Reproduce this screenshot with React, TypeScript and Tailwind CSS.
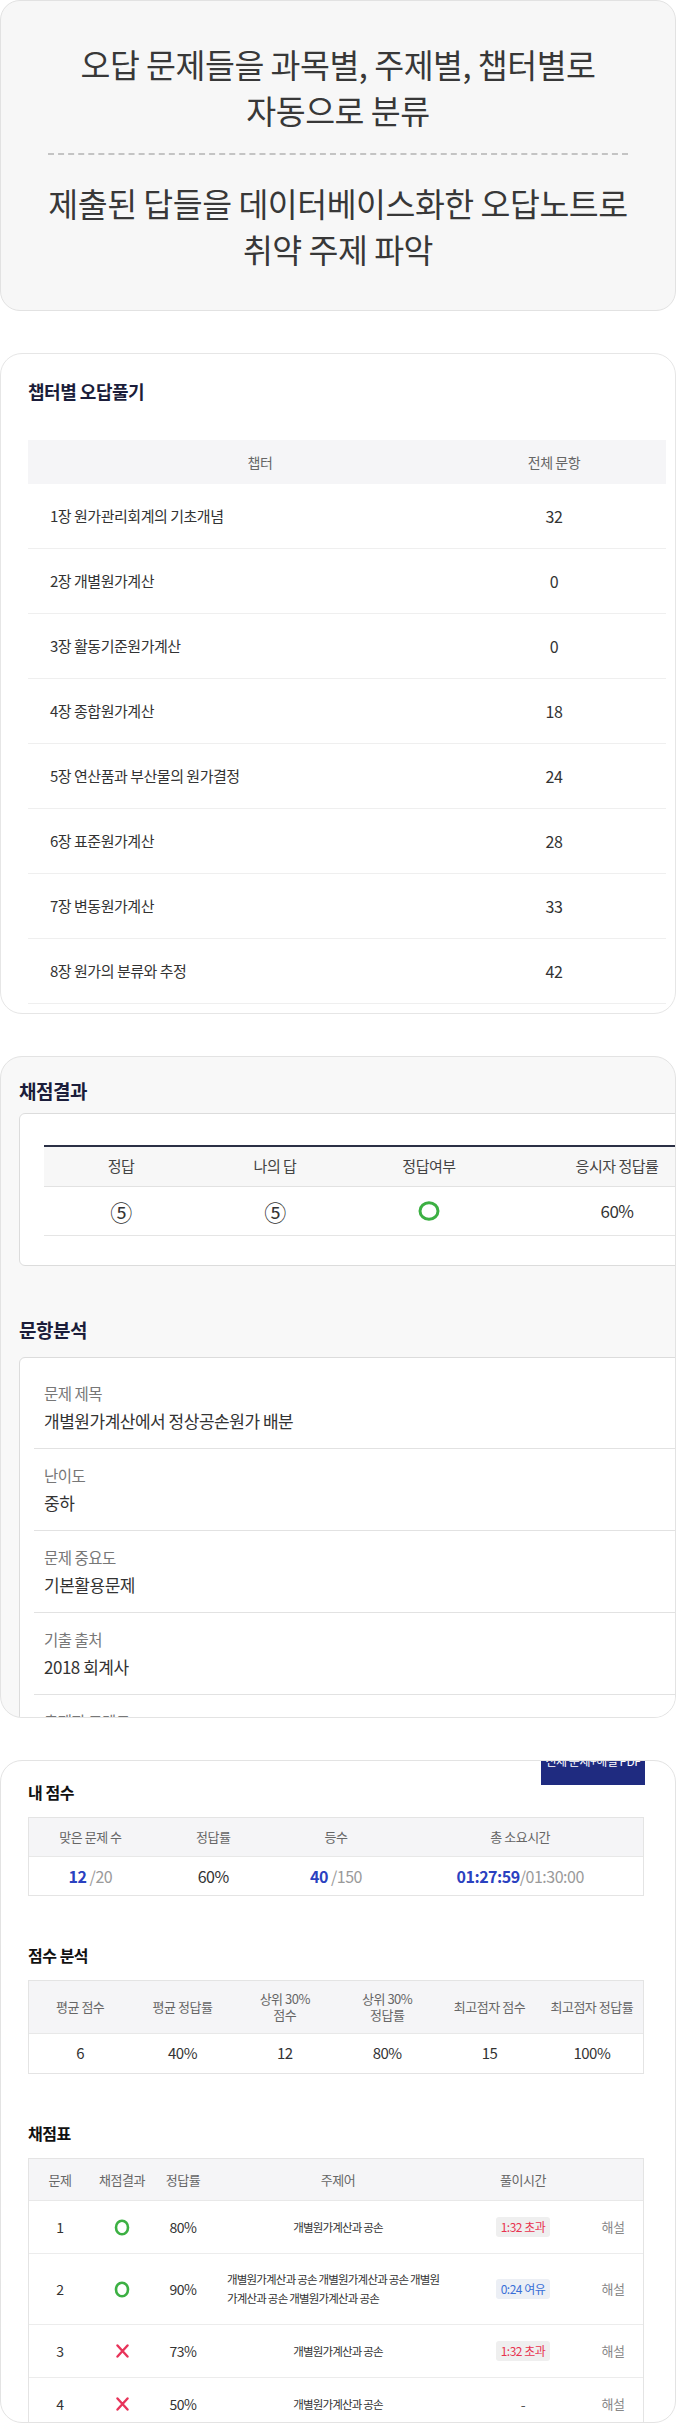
import React from "react";

const chapters = [
  { name: "1장 원가관리회계의 기초개념", count: 32 },
  { name: "2장 개별원가계산", count: 0 },
  { name: "3장 활동기준원가계산", count: 0 },
  { name: "4장 종합원가계산", count: 18 },
  { name: "5장 연산품과 부산물의 원가결정", count: 24 },
  { name: "6장 표준원가계산", count: 28 },
  { name: "7장 변동원가계산", count: 33 },
  { name: "8장 원가의 분류와 추정", count: 42 },
];

const analysis = [
  { label: "문제 제목", value: "개별원가계산에서 정상공손원가 배분" },
  { label: "난이도", value: "중하" },
  { label: "문제 중요도", value: "기본활용문제" },
  { label: "기출 출처", value: "2018 회계사" },
  { label: "출제자 코멘트", value: "" },
];

const scoreStats = [
  { label: ["평균 점수"], value: "6" },
  { label: ["평균 정답률"], value: "40%" },
  { label: ["상위 30%", "점수"], value: "12" },
  { label: ["상위 30%", "정답률"], value: "80%" },
  { label: ["최고점자 점수"], value: "15" },
  { label: ["최고점자 정답률"], value: "100%" },
];

type Row = {
  no: number;
  ok: boolean;
  rate: string;
  topic: string;
  time?: { text: string; over: boolean };
  tall?: boolean;
};

const rows: Row[] = [
  { no: 1, ok: true, rate: "80%", topic: "개별원가계산과 공손", time: { text: "1:32 초과", over: true } },
  {
    no: 2,
    ok: true,
    rate: "90%",
    topic: "개별원가계산과 공손 개별원가계산과 공손 개별원가계산과 공손 개별원가계산과 공손",
    time: { text: "0:24 여유", over: false },
    tall: true,
  },
  { no: 3, ok: false, rate: "73%", topic: "개별원가계산과 공손", time: { text: "1:32 초과", over: true } },
  { no: 4, ok: false, rate: "50%", topic: "개별원가계산과 공손" },
];

const CircleO = () => (
  <svg width="16" height="17" viewBox="0 0 16 17" fill="none">
    <ellipse cx="8" cy="8.5" rx="6" ry="6.8" stroke="#3cb043" strokeWidth="2.6" />
  </svg>
);

const CrossX = () => (
  <svg width="13" height="14" viewBox="0 0 13 14" fill="none">
    <path d="M1.5 1.5L11.5 12.5M11.5 1.5L1.5 12.5" stroke="#e8345a" strokeWidth="2.4" strokeLinecap="round" />
  </svg>
);

export default function App() {
  return (
    <div className="w-[676px] bg-white font-['Noto_Sans_CJK_KR','Noto_Sans',sans-serif] tracking-[-0.03em] flex flex-col gap-[42px]">
      {/* intro card */}
      <div className="h-[311px] rounded-[20px] border border-[#e2e2e2] bg-[#f7f7f7] flex flex-col items-center pt-[40px] text-[#383838]">
        <p className="text-[32.5px] leading-[46px] text-center">
          오답 문제들을 과목별, 주제별, 챕터별로
          <br />
          자동으로 분류
        </p>
        <div className="w-[580px] mt-[20px] border-t-2 border-dashed border-[#c4c4c4]" />
        <p className="mt-[25px] text-[32.5px] leading-[46px] text-center">
          제출된 답들을 데이터베이스화한 오답노트로
          <br />
          취약 주제 파악
        </p>
      </div>

      {/* chapter card */}
      <div className="h-[661px] overflow-hidden rounded-[22px] border border-[#e6e6e6] bg-white pl-[27px] pr-[9px] pt-[24px]">
        <h2 className="text-[18px] font-bold leading-[26px] text-[#1b1d3a]">챕터별 오답풀기</h2>
        <div className="mt-[36px]">
          <div className="grid h-[44px] grid-cols-[464px_124px_1fr] items-center bg-[#f5f5f7] text-[14px] text-[#666]">
            <div className="text-center">챕터</div>
            <div className="text-center">전체 문항</div>
          </div>
          {chapters.map((c) => (
            <div
              key={c.name}
              className="grid h-[65px] grid-cols-[464px_124px_1fr] items-center border-b border-[#efefef] text-[15px] text-[#333]"
            >
              <div className="pl-[22px]">{c.name}</div>
              <div className="text-center text-[16px]">{c.count}</div>
            </div>
          ))}
        </div>
      </div>

      {/* result card */}
      <div className="h-[662px] overflow-hidden rounded-[22px] border border-[#e3e3e3] bg-[#f8f8f8] pl-[18px] pt-[20px]">
        <h2 className="text-[19px] font-bold leading-[28px] text-[#1b1d3a]">채점결과</h2>
        <div className="mt-[8px] h-[153px] w-[720px] rounded-[6px] border border-[#dcdcdc] bg-white pl-[24px] pt-[31px]">
          <div className="border-t-2 border-[#2b3045]">
            <div className="grid h-[40px] grid-cols-[154px_154px_154px_222px] items-center border-b border-[#e2e2e2] bg-[#f7f7f7] text-[15px] text-[#444]">
              <div className="text-center">정답</div>
              <div className="text-center">나의 답</div>
              <div className="text-center">정답여부</div>
              <div className="text-center">응시자 정답률</div>
            </div>
            <div className="grid h-[49px] grid-cols-[154px_154px_154px_222px] items-center border-b border-[#e5e5e5] text-[#333]">
              <div className="text-center text-[22px] leading-[26px]">⑤</div>
              <div className="text-center text-[22px] leading-[26px]">⑤</div>
              <div className="flex justify-center">
                <svg width="22" height="20" viewBox="0 0 22 20" fill="none">
                  <ellipse cx="11" cy="10" rx="9" ry="8.2" stroke="#3cb043" strokeWidth="3" />
                </svg>
              </div>
              <div className="text-center text-[17px]">60%</div>
            </div>
          </div>
        </div>

        <h2 className="mt-[50px] text-[19px] font-bold leading-[28px] text-[#1b1d3a]">문항분석</h2>
        <div className="mt-[13px] w-[720px] rounded-[6px] border border-[#dcdcdc] bg-white pl-[14px] pt-[9px]">
          {analysis.map((a) => (
            <div key={a.label} className="flex flex-col gap-[3px] border-b border-[#e2e2e2] px-[10px] py-[14px]">
              <span className="text-[15.5px] leading-[24px] text-[#777]">{a.label}</span>
              <span className="text-[17px] leading-[26px] text-[#333]">{a.value}</span>
            </div>
          ))}
        </div>
      </div>

      {/* score card */}
      <div className="relative h-[663px] overflow-hidden rounded-[22px] border border-[#e3e3e3] bg-white pl-[27px] pr-[31px] pt-[20px]">
        <div className="absolute right-[30px] top-[-16px] flex h-[40px] w-[104px] justify-center bg-[#1f2b80] pt-[8px] text-[12px] leading-[16px] text-white">
          전체 문제+해설 PDF
        </div>

        <h2 className="text-[16px] font-bold leading-[22px] text-[#111]">내 점수</h2>
        <div className="mt-[14px] border border-[#e4e4e4]">
          <div className="grid h-[39px] grid-cols-[1fr_1fr_1fr_2fr] items-center border-b border-[#e8e8e8] bg-[#f5f5f7] text-[13px] text-[#666]">
            <div className="text-center">맞은 문제 수</div>
            <div className="text-center">정답률</div>
            <div className="text-center">등수</div>
            <div className="text-center">총 소요시간</div>
          </div>
          <div className="grid h-[38px] grid-cols-[1fr_1fr_1fr_2fr] items-center text-[16px]">
            <div className="text-center">
              <b className="text-[#2a41c0]">12</b>
              <span className="text-[#9a9a9a]"> /20</span>
            </div>
            <div className="text-center text-[#333]">60%</div>
            <div className="text-center">
              <b className="text-[#2a41c0]">40</b>
              <span className="text-[#9a9a9a]"> /150</span>
            </div>
            <div className="text-center">
              <b className="text-[#2a41c0]">01:27:59</b>
              <span className="text-[#9a9a9a]">/01:30:00</span>
            </div>
          </div>
        </div>

        <h2 className="mt-[48px] text-[16px] font-bold leading-[22px] text-[#111]">점수 분석</h2>
        <div className="mt-[14px] border border-[#e4e4e4]">
          <div className="grid h-[53px] grid-cols-6 items-center border-b border-[#e8e8e8] bg-[#f5f5f7] text-[13px] leading-[16px] text-[#666]">
            {scoreStats.map((s) => (
              <div key={s.label.join()} className="text-center">
                {s.label.map((l) => (
                  <div key={l}>{l}</div>
                ))}
              </div>
            ))}
          </div>
          <div className="grid h-[39px] grid-cols-6 items-center text-[15px] text-[#333]">
            {scoreStats.map((s) => (
              <div key={s.label.join()} className="text-center">
                {s.value}
              </div>
            ))}
          </div>
        </div>

        <h2 className="mt-[48px] text-[16px] font-bold leading-[22px] text-[#111]">채점표</h2>
        <div className="mt-[14px] border border-[#e4e4e4]">
          <div className="grid h-[42px] grid-cols-[62px_62px_60px_250px_120px_1fr] items-center border-b border-[#e8e8e8] bg-[#f5f5f7] text-[13px] text-[#666]">
            <div className="text-center">문제</div>
            <div className="text-center">채점결과</div>
            <div className="text-center">정답률</div>
            <div className="text-center">주제어</div>
            <div className="text-center">풀이시간</div>
            <div />
          </div>
          {rows.map((r) => (
            <div
              key={r.no}
              className={`grid grid-cols-[62px_62px_60px_250px_120px_1fr] items-center border-b border-[#ececec] text-[14px] text-[#333] ${
                r.tall ? "h-[71px]" : "h-[53px]"
              }`}
            >
              <div className="text-center">{r.no}</div>
              <div className="flex justify-center">{r.ok ? <CircleO /> : <CrossX />}</div>
              <div className="text-center">{r.rate}</div>
              <div className="flex justify-center px-[14px]">
                <span className="break-all text-left text-[11.5px] leading-[19px] tracking-[-0.07em]">{r.topic}</span>
              </div>
              <div className="flex justify-center">
                {r.time ? (
                  <span
                    className={`flex h-[20px] items-center rounded-[3px] px-[5px] text-[12px] ${
                      r.time.over ? "bg-[#efefef] text-[#e8334f]" : "bg-[#eceff5] text-[#3a6fd8]"
                    }`}
                  >
                    {r.time.text}
                  </span>
                ) : (
                  <span className="text-[#555]">-</span>
                )}
              </div>
              <div className="text-center text-[13px] text-[#888]">해설</div>
            </div>
          ))}
        </div>
      </div>
    </div>
  );
}
